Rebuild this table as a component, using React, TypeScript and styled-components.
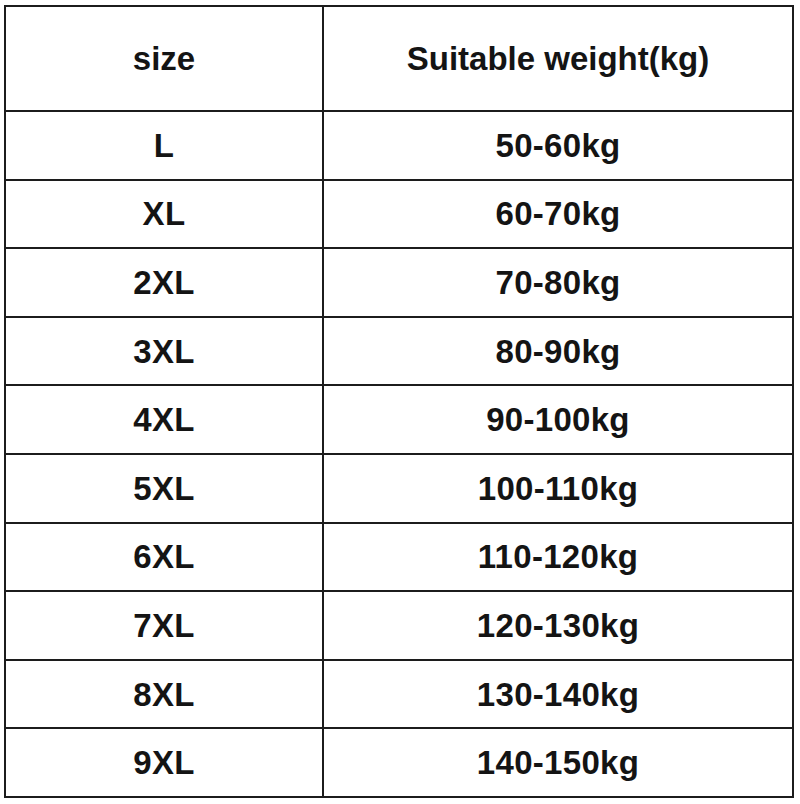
import React from 'react';
import styled, { createGlobalStyle } from 'styled-components';

const GlobalStyle = createGlobalStyle`
  html, body {
    margin: 0;
    padding: 0;
    background: #ffffff;
  }
  body {
    font-family: "Liberation Sans", Arial, sans-serif;
  }
`;

const Page = styled.div`
  width: 800px;
  height: 804px;
  padding: 5px 0 0 4px;
  box-sizing: border-box;
  background: #fff;
`;

const Grid = styled.div`
  display: grid;
  grid-template-columns: 316px 468px;
  grid-template-rows: 103px repeat(10, 66.6px);
  gap: 2px;
  padding: 2px;
  width: 790px;
  box-sizing: border-box;
  background: #1c1c1c;
`;

const Cell = styled.div<{ $head?: boolean }>`
  background: #fff;
  display: flex;
  align-items: center;
  justify-content: center;
  font-size: 33px;
  font-weight: 700;
  color: #141414;
  letter-spacing: ${(p) => (p.$head ? '0' : '0.3px')};
  padding-top: ${(p) => (p.$head ? '0' : '1px')};
`;

const rows: [string, string][] = [
  ['L', '50-60kg'],
  ['XL', '60-70kg'],
  ['2XL', '70-80kg'],
  ['3XL', '80-90kg'],
  ['4XL', '90-100kg'],
  ['5XL', '100-110kg'],
  ['6XL', '110-120kg'],
  ['7XL', '120-130kg'],
  ['8XL', '130-140kg'],
  ['9XL', '140-150kg'],
];

export default function App() {
  return (
    <Page>
      <GlobalStyle />
      <Grid>
        <Cell $head>size</Cell>
        <Cell $head>Suitable weight(kg)</Cell>
        {rows.map(([size, weight]) => (
          <React.Fragment key={size}>
            <Cell>{size}</Cell>
            <Cell>{weight}</Cell>
          </React.Fragment>
        ))}
      </Grid>
    </Page>
  );
}
